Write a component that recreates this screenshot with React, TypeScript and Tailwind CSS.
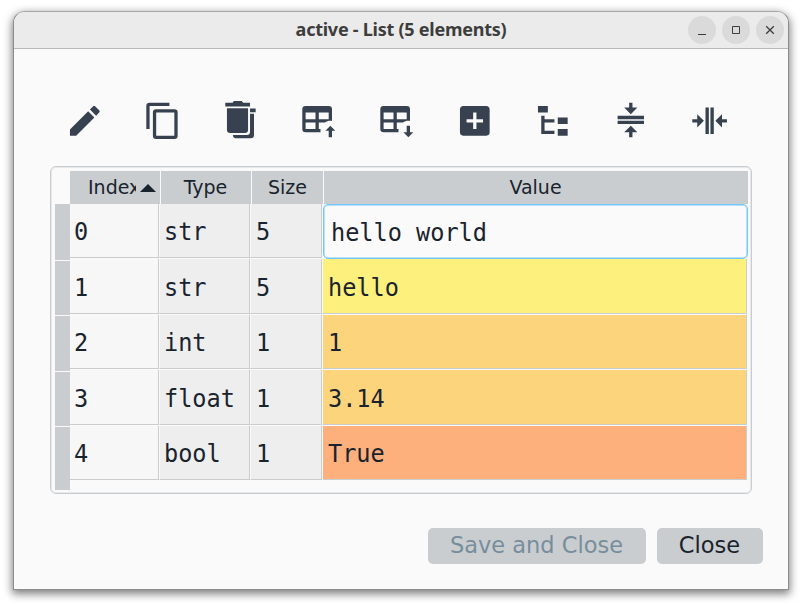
import React from "react";

const icons: string[] = [
  "M20.71,7.04C21.1,6.65 21.1,6 20.71,5.63L18.37,3.29C18,2.9 17.35,2.9 16.96,3.29L15.12,5.12L18.87,8.87M3,17.25V21H6.75L17.81,9.93L14.06,6.18L3,17.25Z",
  "M19,21H8V7H19M19,5H8A2,2 0 0,0 6,7V21A2,2 0 0,0 8,23H19A2,2 0 0,0 21,21V7A2,2 0 0,0 19,5M16,1H4A2,2 0 0,0 2,3V17H4V3H16V1Z",
  "M2.6,1H7L7.8,0H12.6L13.4,1H17.6V3.3H2.6V1M3.6,4.4H16.4V17.4A2,2 0 0,1 14.4,19.4H5.6A2,2 0 0,1 3.6,17.4V4.4M17.6,4.6H21V6.8H17.6V4.6M17.6,7.7H20V20.6A2,2 0 0,1 18,22.6H9A2,2 0 0,1 7.2,20.6H15.6A2,2 0 0,0 17.6,18.6Z",
  "M4,3H18A2,2 0 0,1 20,5V12.08C18.45,11.82 16.92,12.18 15.68,13H12V17H13.08C12.97,17.68 12.97,18.35 13.08,19H4A2,2 0 0,1 2,17V5A2,2 0 0,1 4,3M4,7V11H10V7H4M12,7V11H18V7H12M4,13V17H10V13H4M16,18H18V22H20V18H22L19,15L16,18Z",
  "M4,3H18A2,2 0 0,1 20,5V12.08C18.45,11.82 16.92,12.18 15.68,13H12V17H13.08C12.97,17.68 12.97,18.35 13.08,19H4A2,2 0 0,1 2,17V5A2,2 0 0,1 4,3M4,7V11H10V7H4M12,7V11H18V7H12M4,13V17H10V13H4M18,15H20V19H22L19,22L16,19H18V15Z",
  "M17,13H13V17H11V13H7V11H11V7H13V11H17M19,3H5C3.89,3 3,3.89 3,5V19A2,2 0 0,0 5,21H19A2,2 0 0,0 21,19V5C21,3.89 20.1,3 19,3Z",
  "M3,3H9V7H3V3M15,10H21V14H15V10M15,17H21V21H15V17M13,13H7V18H13V20H5V9H7V11H13V13Z",
  "M4,12H20V14H4V12M4,9H20V11H4V9M16,4L12,8L8,4H11V1H13V4H16M8,19L12,15L16,19H13V22H11V19H8Z",
  "M13,20V4H15.03V20H13M10,20V4H12.03V20H10M5,8L9.03,12L5,16V13H2V11H5V8M20,16L16,12L20,8V11H23V13H20V16Z",
];

const rows = [
  { h: "h-[55px]", type: "str", size: "5", value: "hello world", bg: "" },
  { h: "h-[56px]", type: "str", size: "5", value: "hello", bg: "bg-[#fdf07c]" },
  { h: "h-[55px]", type: "int", size: "1", value: "1", bg: "bg-[#fcd47c]" },
  { h: "h-[56px]", type: "float", size: "1", value: "3.14", bg: "bg-[#fcd47c]" },
  { h: "h-[55px]", type: "bool", size: "1", value: "True", bg: "bg-[#fdb07c]" },
];

function WindowButton({ children }: { children: React.ReactNode }) {
  return (
    <button className="flex h-7 w-7 items-center justify-center rounded-full bg-[#dadada]">
      <svg width="28" height="28" viewBox="0 0 28 28" fill="none" stroke="#3d3d3d">
        {children}
      </svg>
    </button>
  );
}

function MonoText({ children }: { children: string }) {
  return <span className="inline-block origin-left scale-x-[0.942]">{children}</span>;
}

function Cell({ className, pad = "pl-[4px]", children }: { className: string; pad?: string; children: string }) {
  return (
    <div className={`border-b border-r border-[#c9cdd0] ${className}`}>
      <div className={`flex h-full items-center whitespace-pre pt-[3px] ${pad}`}>
        <MonoText>{children}</MonoText>
      </div>
    </div>
  );
}

export default function App() {
  return (
    <div className="h-[606px] w-[802px] overflow-hidden bg-white pl-[13px] pt-[11px] font-['DejaVu_Sans',sans-serif] text-[#19232d]">
      <div className="h-[579px] w-[776px] overflow-hidden rounded-t-[12px] border border-[#8c8c8c] border-t-[#a6a6a6] bg-[#fafafa] shadow-[0_3px_9px_1px_rgba(0,0,0,0.5)]">
        <header className="relative flex h-[37px] items-center justify-end gap-[6px] border-b border-[#b9b9b9] bg-[#ebebeb] pr-[4px]">
          <h1 className="absolute left-0 top-0 flex h-[35px] w-full items-center justify-center font-['Noto_Sans',sans-serif] text-[18px] font-bold tracking-[-0.25px] text-[#3d3d3d]">
            active - List (5 elements)
          </h1>
          <WindowButton><path d="M10 18.5h8" /></WindowButton>
          <WindowButton><path d="M10.5 10.5h7v7h-7z" /></WindowButton>
          <WindowButton><path d="M10.2 10.2l7.6 7.6M17.8 10.2l-7.6 7.6" strokeWidth="1.3" /></WindowButton>
        </header>

        <nav className="flex h-[117px] pl-[32px] pt-[51.6px]">
          {icons.map((d, i) => (
            <button key={i} className="flex h-10 w-[78px] justify-center">
              <svg className="h-[39.6px] w-[39.6px]" viewBox="0 0 24 24" fill="#37414f">
                <path d={d} fillRule="evenodd" />
              </svg>
            </button>
          ))}
        </nav>

        <main className="ml-[36px] h-[328px] w-[702px] rounded-[6px] border border-[#c9cdd0] pl-[4px] pt-[4px] shadow-[inset_0_0_0_1px_#e6e8e9]">
          <div className="flex h-[33px] pl-[15px] text-[19px]">
            <div className="flex w-[91px] items-center border-r border-[#fafafa] bg-[#c9cdd0] pl-[18px]">
              <span className="w-[48px] overflow-hidden whitespace-nowrap">Index</span>
              <svg className="ml-[4px]" width="16" height="8" viewBox="0 0 16 8" fill="#19232d"><path d="M0 8L8 0L16 8Z" /></svg>
            </div>
            <div className="flex w-[91px] items-center justify-center border-r border-[#fafafa] bg-[#c9cdd0] pr-px">Type</div>
            <div className="flex w-[72px] items-center justify-center border-r border-[#fafafa] bg-[#c9cdd0]">Size</div>
            <div className="flex w-[424px] items-center justify-center bg-[#c9cdd0] pr-px">Value</div>
          </div>
          <div className="flex font-['DejaVu_Sans_Mono',monospace] text-[25px]">
            <div className="flex h-[286px] w-[15px] flex-col gap-px">
              <div className="h-[55.5px] bg-[#c9cdd0]" />
              <div className="h-[54.5px] bg-[#c9cdd0]" />
              <div className="h-[54.5px] bg-[#c9cdd0]" />
              <div className="h-[54.5px] bg-[#c9cdd0]" />
              <div className="flex-1 bg-[#c9cdd0]" />
            </div>
            <div>
              {rows.map((r, i) => (
                <div key={i} className={`flex pb-px ${r.h}`}>
                  <Cell className="w-[89px] bg-[#f7f7f7]" pad="pl-[3.5px]">{String(i)}</Cell>
                  <Cell className="w-[91px] border-l border-l-[#fafafa] bg-[#eeeeee]" pad="pl-[3.5px]">{r.type}</Cell>
                  <Cell className="w-[72px] border-l border-l-[#fafafa] bg-[#eeeeee]" pad="pl-[4.5px]">{r.size}</Cell>
                  {i === 0 ? (
                    <div className="-mb-px ml-px flex w-[425px] items-center whitespace-pre rounded-[5px] border border-[#73c7ff] bg-[#fafafa] pl-[6.5px] pt-[2px] shadow-[inset_0_0_0_0.5px_#73c7ff]">
                      <MonoText>{r.value}</MonoText>
                    </div>
                  ) : (
                    <Cell className={`ml-px w-[424px] ${r.bg}`} pad="pl-[4.5px]">{r.value}</Cell>
                  )}
                </div>
              ))}
            </div>
          </div>
        </main>

        <footer className="flex justify-end gap-[11px] pr-[25.5px] pt-[34px] text-[22.5px]">
          <button className="h-[35.5px] w-[218px] rounded-[5px] bg-[#c9cdd0] text-[#788d9c]">Save and Close</button>
          <button className="h-[35.5px] w-[106px] rounded-[5px] bg-[#c9cdd0]">Close</button>
        </footer>
      </div>
    </div>
  );
}
